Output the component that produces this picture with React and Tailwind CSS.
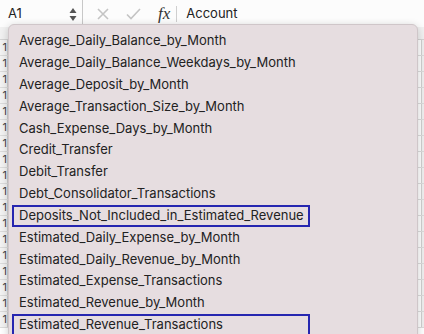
import React from "react";

const items = [
  "Average_Daily_Balance_by_Month",
  "Average_Daily_Balance_Weekdays_by_Month",
  "Average_Deposit_by_Month",
  "Average_Transaction_Size_by_Month",
  "Cash_Expense_Days_by_Month",
  "Credit_Transfer",
  "Debit_Transfer",
  "Debt_Consolidator_Transactions",
  "Deposits_Not_Included_in_Estimated_Revenue",
  "Estimated_Daily_Expense_by_Month",
  "Estimated_Daily_Revenue_by_Month",
  "Estimated_Expense_Transactions",
  "Estimated_Revenue_by_Month",
  "Estimated_Revenue_Transactions",
];
const boxed = new Set([8, 13]);

export default function App() {
  const rows = Array.from({ length: 18 });
  return (
    <div className="relative w-[424px] h-[334px] overflow-hidden bg-white text-[#222]" style={{ fontFamily: 'Inter, "Liberation Sans", Arial, sans-serif' }}>
      {/* formula bar */}
      <div className="flex h-[27px] items-center bg-[#fcfcfc]">
        <div className="flex h-full w-[83px] items-center justify-between border-r border-[#c8c8c8] pl-[8px] pr-[4px]">
          <span className="text-[13px]">A1</span>
          <svg width="10" height="16" viewBox="0 0 10 16">
            <path d="M5 2 L8.5 7 L1.5 7 Z" fill="#555" />
            <path d="M5 15 L8.5 10 L1.5 10 Z" fill="#555" />
          </svg>
        </div>
        <svg className="ml-[14px]" width="12" height="12" viewBox="0 0 12 12">
          <path d="M1 1 L11 11 M11 1 L1 11" stroke="#c4c4c4" strokeWidth="1.6" />
        </svg>
        <svg className="ml-[17px]" width="15" height="12" viewBox="0 0 15 12">
          <path d="M1 6.5 L5 10.5 L14 1" stroke="#c4c4c4" strokeWidth="1.6" fill="none" />
        </svg>
        <span className="ml-[17px] text-[17px] italic text-[#333]" style={{ fontFamily: '"Liberation Serif", serif' }}>fx</span>
        <div className="ml-[6px] h-[16px] w-px bg-[#cfcfcf]" />
        <span className="ml-[9px] text-[13px]">Account</span>
      </div>
      {/* sheet behind */}
      <div className="flex flex-col">
        <div className="h-[13px] border-b border-[#d4d4d4] bg-[#f1f1f1]" />
        {rows.map((_, i) => (
          <div key={i} className="flex h-[16px] border-b border-[#dcdcdc]">
            <div className="flex w-[8px] items-center justify-end overflow-hidden border-r border-[#cfcfcf] bg-[#f3f3f3] text-[11px] text-[#444]">1</div>
            <div className="flex-1" />
            <div className="w-[3px] border-l border-[#d0d0d0] bg-[#efefef]" />
          </div>
        ))}
      </div>
      {/* dropdown menu */}
      <div className="absolute left-[8px] top-[24px] h-[330px] w-[410px] rounded-t-[6px] border border-[#cfc6c9] bg-[#e6dde0] pt-[5px] shadow-[0_2px_8px_rgba(0,0,0,0.2)]">
        {items.map((t, i) => (
          <div
            key={t}
            className={
              "flex h-[21.85px] items-center text-[13px] text-[#222] " +
              (boxed.has(i) ? "ml-[3px] w-[298px] border-2 border-[#2626b0] pl-[5px]" : "pl-[10px]")
            }
          >
            {t}
          </div>
        ))}
      </div>
    </div>
  );
}
